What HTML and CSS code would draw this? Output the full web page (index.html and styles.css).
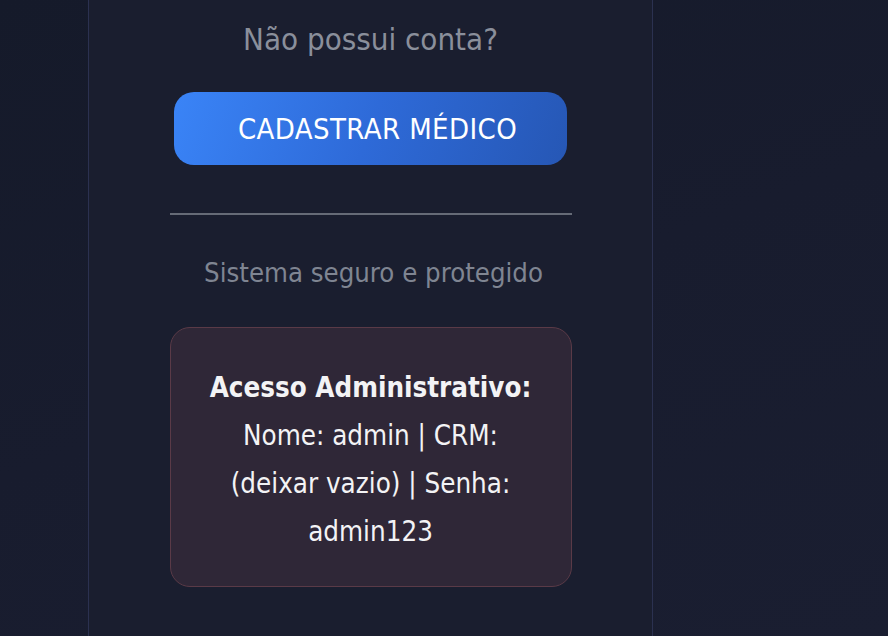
FILE: index.html
```html
<!DOCTYPE html>
<html lang="pt-BR">
<head>
<meta charset="utf-8">
<title>Cadastro</title>
<link rel="stylesheet" href="styles.css">
</head>
<body>
<div class="page">
  <section class="card">
    <p class="question">Não possui conta?</p>
    <button class="btn-register" type="button">CADASTRAR MÉDICO</button>
    <hr class="divider">
    <p class="secure">Sistema seguro e protegido</p>
    <div class="admin-box">
      <strong>Acesso Administrativo:</strong><br>
      Nome: admin | CRM: (deixar vazio) | Senha: admin123
    </div>
  </section>
</div>
</body>
</html>
```

FILE: styles.css
```css
html, body {
  margin: 0;
  padding: 0;
}

body {
  background: linear-gradient(160deg, #151a2a 0%, #181c2e 50%, #1a1e31 100%);
  font-family: "DejaVu Sans Condensed", "DejaVu Sans", sans-serif;
  height: 636px;
  overflow: hidden;
}

.page {
  display: flex;
  padding-left: 88px;
  height: 636px;
}

.card {
  width: 563px;
  border-left: 1px solid #2b3150;
  border-right: 1px solid #2b3150;
  background: #1a1e2f;
  display: flex;
  flex-direction: column;
  align-items: center;
  padding-top: 21px;
}

.question {
  margin: 0;
  font-size: 31px;
  line-height: 36px;
  color: #8a8f9b;
}

.btn-register {
  margin-top: 35px;
  width: 393px;
  height: 73px;
  border: none;
  border-radius: 20px;
  background: linear-gradient(110deg, #3a84f7 0%, #2e6ad8 50%, #2657b5 100%);
  color: #ffffff;
  font-family: "DejaVu Sans Condensed", "DejaVu Sans", sans-serif;
  font-size: 29px;
  letter-spacing: 0.4px;
  padding: 0 0 0 14px;
}

.divider {
  margin: 48px 0 0;
  width: 402px;
  height: 2px;
  border: none;
  background: #666b77;
}

.secure {
  margin: 42px 0 0 6px;
  font-size: 27.3px;
  line-height: 32px;
  color: #7f8592;
}

.admin-box {
  margin-top: 38px;
  box-sizing: border-box;
  width: 402px;
  padding: 35px 38px 31px;
  border: 1px solid #5a3a47;
  border-radius: 20px;
  background: #2f2737;
  color: #f3f3f5;
  text-align: center;
  font-size: 27.5px;
  line-height: 48px;
}

.admin-box strong {
  font-weight: bold;
}
```
